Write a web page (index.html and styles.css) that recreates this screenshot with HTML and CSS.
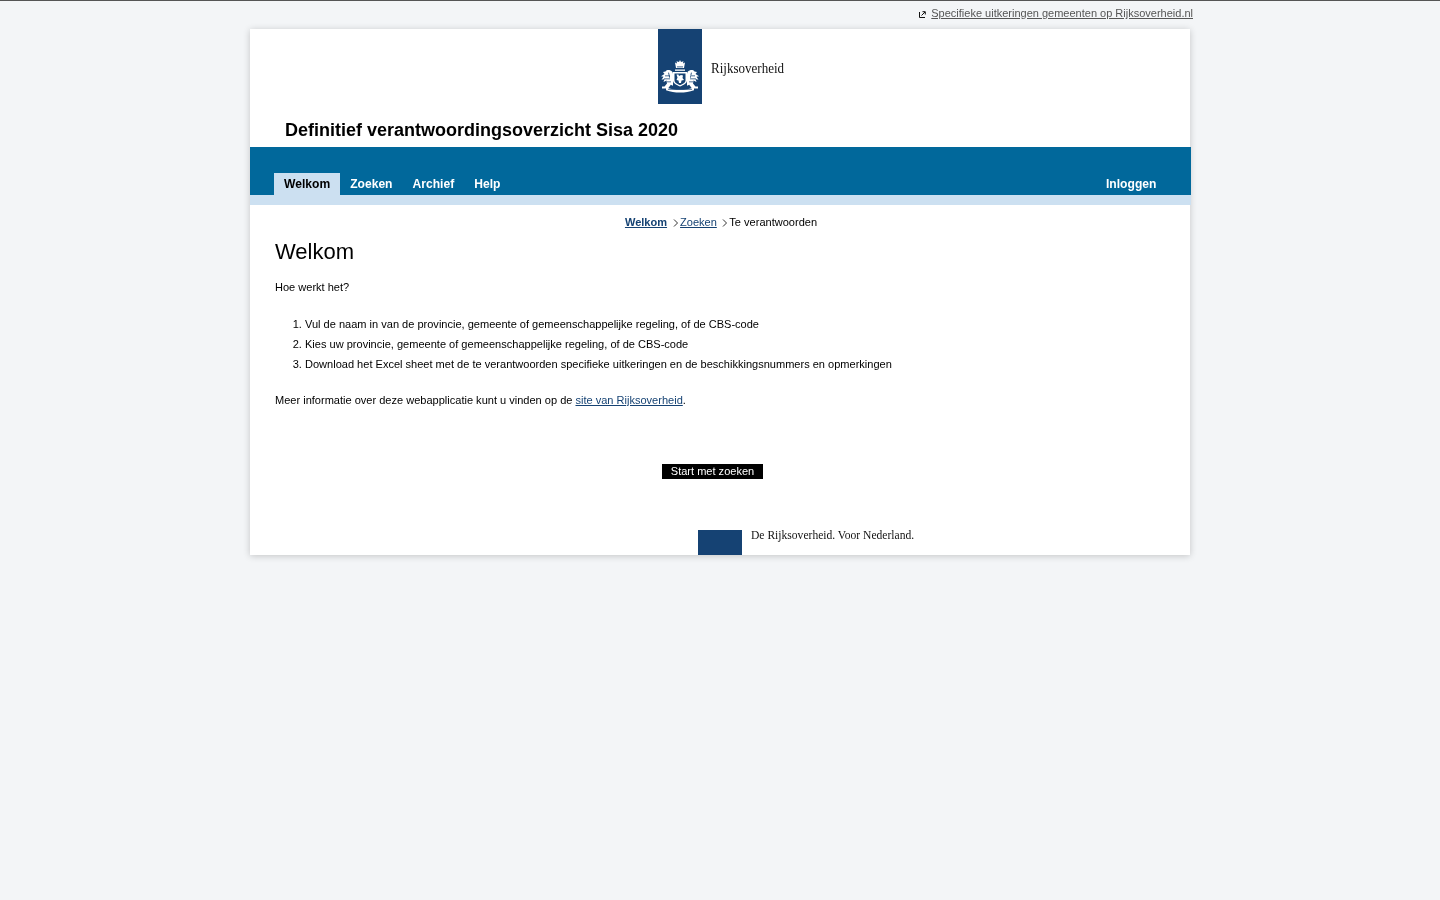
FILE: index.html
```html
<!DOCTYPE html>
<html lang="nl">
<head>
<meta charset="utf-8">
<title>Definitief verantwoordingsoverzicht Sisa 2020</title>
<link rel="stylesheet" href="styles.css">
</head>
<body>
<div class="toplink">
  <svg class="ext-icon" width="7" height="7" viewBox="0 0 7 7"><path d="M.5 1v5.500h5.500M2.500 4.500L6 1M3.500.7h2.800v2.800" fill="none" stroke="#111" stroke-width="1"/></svg>
  <a href="#">Specifieke uitkeringen gemeenten op Rijksoverheid.nl</a>
</div>
<div class="page">
  <header class="logo-row">
    <div class="logo-block">
      <svg width="44" height="75" viewBox="0 0 44 75">
        <rect width="44" height="75" fill="#154273"/>
        <g fill="#fff">
          <path d="M22 31l1 2 2.500-.8-.6 2.200 2.100-.8-1 5.400h-8l-1-5.400 2.100.8-.6-2.200 2.500.8z"/>
          <rect x="17" y="40.500" width="10" height="1.300"/>
          <path d="M15 43h14v8.500c0 3-3.500 4.500-7 6-3.500-1.500-7-3-7-6z"/>
          <path d="M14.500 43c-2.500-2.500-5.500-2.500-7-.5l-2.500.5 1.500 2-3.500 2.200 2.500.5-2 3 3-.8-1 3 3-1.500.5 3-2.500 3.200h-2.500v1.800h6l2.800-3.700 2.200 1v-12z"/>
          <path d="M29.500 43c2.500-2.500 5.500-2.500 7-.5l2.500.5-1.500 2 3.500 2.200-2.500.5 2 3-3-.8 1 3-3-1.500-.5 3 2.500 3.200h2.500v1.800h-6l-2.800-3.700-2.200 1v-12z"/>
          <path d="M8 58.500c4.500 1.500 9 2.300 14 2.300s9.500-.8 14-2.300v2.700c-4.500 1.500-9 2.300-14 2.300s-9.500-.8-14-2.300z"/>
        </g>
        <g fill="#154273">
          <path d="M16.500 44.500h11v7c0 2.200-2.800 3.500-5.500 4.700-2.700-1.200-5.500-2.500-5.500-4.700z"/>
          <rect x="19" y="37.500" width="6" height=".8"/>
          <path d="M7 46.500h5v.8h-5zM6 49.500h6v.8h-6zM9 52.500h4v.8h-4zM11 43.500l1 5-.8.200-1-5z"/>
          <path d="M32 46.500h5v.8h-5zM32 49.500h6v.8h-6zM31 52.500h4v.8h-4zM33 43.500l-1 5 .8.200 1-5z"/>
          <rect x="10" y="60" width="24" height=".6"/>
        </g>
        <path d="M18.500 45.500h2l.5 1.500 2-1 2 .5-.5 2.500 1.500 2-2.500.5-.5 2.500h-2l-.5-2.500-2-.5 1-2.500z" fill="#fff"/>
      </svg>
      <span class="wordmark">Rijksoverheid</span>
    </div>
  </header>
  <h2 class="app-title">Definitief verantwoordingsoverzicht Sisa 2020</h2>
  <nav class="nav">
    <ul class="nav-tabs">
      <li class="nav-tab active"><a href="#">Welkom</a></li>
      <li class="nav-tab"><a href="#">Zoeken</a></li>
      <li class="nav-tab"><a href="#">Archief</a></li>
      <li class="nav-tab"><a href="#">Help</a></li>
    </ul>
    <a class="nav-login" href="#">Inloggen</a>
  </nav>
  <div class="nav-strip"></div>
  <div class="crumbs">
    <a class="crumb-first" href="#">Welkom</a>
    <svg class="chev" width="5" height="8" viewBox="0 0 5 8"><path d="M1 .5l3.500 3.500-3.500 3.500" fill="none" stroke="#333" stroke-width="1"/></svg>
    <a href="#">Zoeken</a>
    <svg class="chev" width="5" height="8" viewBox="0 0 5 8"><path d="M1 .5l3.500 3.500-3.500 3.500" fill="none" stroke="#333" stroke-width="1"/></svg>
    <span class="crumb-current">Te verantwoorden</span>
  </div>
  <main class="content">
    <h1 class="heading">Welkom</h1>
    <p class="intro">Hoe werkt het?</p>
    <ol class="steps">
      <li>Vul de naam in van de provincie, gemeente of gemeenschappelijke regeling, of de CBS-code</li>
      <li>Kies uw provincie, gemeente of gemeenschappelijke regeling, of de CBS-code</li>
      <li>Download het Excel sheet met de te verantwoorden specifieke uitkeringen en de beschikkingsnummers en opmerkingen</li>
    </ol>
    <p class="more">Meer informatie over deze webapplicatie kunt u vinden op de <a href="#">site van Rijksoverheid</a>.</p>
    <div class="actions"><button class="start" type="button">Start met zoeken</button></div>
  </main>
  <footer class="footer">
    <div class="footer-block"></div>
    <span class="tagline">De Rijksoverheid. Voor Nederland.</span>
  </footer>
</div>
</body>
</html>
```
FILE: styles.css
```css
* { box-sizing: border-box; }
html, body { margin: 0; padding: 0; }
body {
  background: #f3f5f7;
  border-top: 1px solid #555;
  font-family: "Liberation Sans", Arial, sans-serif;
  font-size: 11.04px;
  color: #000;
  min-height: 900px;
}
a { color: #154273; }
.toplink {
  width: 943px;
  margin-left: 250px;
  height: 28px;
  display: flex;
  justify-content: flex-end;
  align-items: flex-start;
  padding-top: 6px;
  font-size: 11px;
  line-height: 13px;
  will-change: transform;
}
.toplink a { color: #555; }
.ext-icon { margin: 4px 5px 0 0; }
.page {
  width: 940px;
  margin-left: 250px;
  background: #fff;
  box-shadow: 0 1px 7px rgba(0, 0, 0, .2);
}
.logo-row { height: 75px; padding-left: 408px; will-change: transform; }
.logo-block { display: flex; align-items: flex-start; }
.wordmark {
  font-family: "Liberation Serif", serif;
  font-size: 14px;
  line-height: 15px;
  margin: 32px 0 0 9px;
  color: #111;
  display: inline-block;
  transform: scaleX(.93);
  transform-origin: left center;
}
.app-title {
  margin: 0;
  height: 43px;
  padding: 15px 0 0 35px;
  font-size: 18px;
  line-height: 22px;
  font-weight: bold;
  will-change: transform;
}
.nav {
  width: 941px;
  height: 48px;
  background: #01689b;
  padding: 26px 34.400px 0 24px;
  display: flex;
  justify-content: space-between;
}
.nav-tabs { list-style: none; margin: 0; padding: 0; display: flex; will-change: transform; }
.nav-tab a {
  display: block;
  height: 22px;
  line-height: 22px;
  padding: 0 10px;
  color: #fff;
  font-size: 12.1px;
  font-weight: bold;
  text-decoration: none;
}
.nav-tab.active a { background: #cce0f1; color: #000; }
.nav-login {
  color: #fff;
  font-size: 12.1px;
  font-weight: bold;
  line-height: 22px;
  text-decoration: none;
  will-change: transform;
}
.nav-strip { width: 941px; height: 10px; background: #cce0f1; }
.crumbs {
  height: 23px;
  padding: 11px 0 0 2px;
  display: flex;
  justify-content: center;
  align-items: flex-start;
  line-height: 13px;
  will-change: transform;
}
.crumb-first { font-weight: bold; }
.crumb-current { margin-left: -.5px; }
.chev { margin: 3px 2.500px 0 5.500px; }
.content { padding: 0 40px 0 25px; will-change: transform; }
.heading {
  margin: 0;
  padding-top: 11px;
  font-size: 22px;
  line-height: 26px;
  font-weight: normal;
}
.intro { margin: 0; padding-top: 16px; line-height: 13px; }
.steps { margin: 0; padding: 20px 0 0 30px; }
.steps li { line-height: 20px; }
.more { margin: 0; padding-top: 20px; line-height: 13px; }
.actions { padding-top: 57px; display: flex; justify-content: center; }
.start {
  width: 101px;
  height: 15px;
  border: 0;
  padding: 0;
  background: #000;
  color: #fff;
  font: 11.04px/15px "Liberation Sans", Arial, sans-serif;
  display: block;
}
.footer {
  height: 76px;
  padding: 51px 0 0 448px;
  display: flex;
  align-items: flex-start;
  will-change: transform;
}
.footer-block { width: 44px; height: 25px; background: #154273; }
.tagline {
  font-family: "Liberation Serif", serif;
  font-size: 13px;
  line-height: 14px;
  margin: -2px 0 0 9px;
  color: #111;
  display: inline-block;
  white-space: nowrap;
  transform: scaleX(.89);
  transform-origin: left center;
}
```
